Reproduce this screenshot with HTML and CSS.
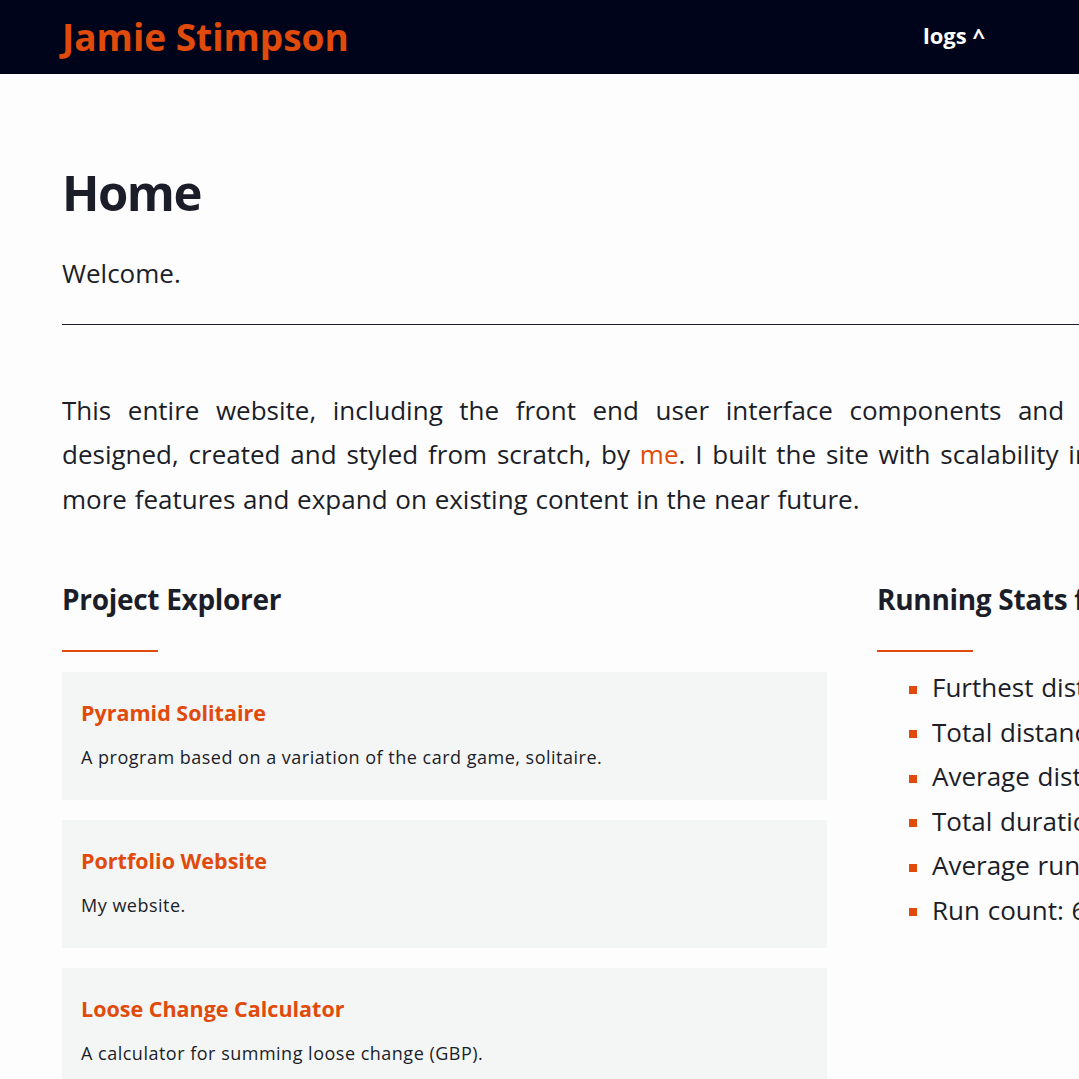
FILE: index.html
```html
<!DOCTYPE html>
<html lang="en">
<head>
<meta charset="utf-8">
<title>Jamie Stimpson</title>
<link rel="stylesheet" href="styles.css">
</head>
<body>
<header class="topbar">
  <a class="brand" href="#">Jamie Stimpson</a>
  <nav class="nav"><a class="nav-link" href="#">logs ^</a></nav>
</header>
<main class="page">
  <h1 class="page-title">Home</h1>
  <p class="lead">Welcome.</p>
  <hr class="rule">
  <p class="intro">This entire website, including the front end user interface components and backend, was designed, created and styled from scratch, by <a class="link" href="#">me</a>. I built the site with scalability in mind to add more features and expand on existing content in the near future.</p>
  <div class="columns">
    <section class="col">
      <h2 class="section-title">Project Explorer</h2>
      <div class="accent"></div>
      <div class="cards">
        <article class="card">
          <h3 class="card-title">Pyramid Solitaire</h3>
          <p class="card-text">A program based on a variation of the card game, solitaire.</p>
        </article>
        <article class="card">
          <h3 class="card-title">Portfolio Website</h3>
          <p class="card-text">My website.</p>
        </article>
        <article class="card">
          <h3 class="card-title">Loose Change Calculator</h3>
          <p class="card-text">A calculator for summing loose change (GBP).</p>
        </article>
      </div>
    </section>
    <section class="col">
      <h2 class="section-title">Running Stats for 2021</h2>
      <div class="accent"></div>
      <ul class="stats">
        <li class="stat"><span class="bullet"></span>Furthest distance: 7.2km</li>
        <li class="stat"><span class="bullet"></span>Total distance: 31.5km</li>
        <li class="stat"><span class="bullet"></span>Average distance: 5.25km</li>
        <li class="stat"><span class="bullet"></span>Total duration: 3h 12m</li>
        <li class="stat"><span class="bullet"></span>Average run time: 32m</li>
        <li class="stat"><span class="bullet"></span>Run count: 6</li>
      </ul>
    </section>
  </div>
</main>
</body>
</html>
```
FILE: styles.css
```css
html {
  overflow: hidden;
}
body {
  margin: 0;
  background: #fdfdfd;
  color: #1b1d28;
  font-family: "Open Sans", Lato, sans-serif;
}
a {
  text-decoration: none;
}
.topbar {
  height: 74px;
  background: #00041a;
  display: flex;
  align-items: center;
  justify-content: space-between;
  padding: 0 94px 0 62px;
}
.brand {
  color: #e04a0a;
  font-size: 37px;
  font-weight: 700;
  line-height: 74px;
}
.nav {
  padding-bottom: 4px;
}
.nav-link {
  color: #ffffff;
  font-size: 22px;
  font-weight: 700;
}
.page {
  width: 1192px;
  padding: 87px 0 40px 62px;
}
.page-title {
  margin: 0;
  font-size: 49px;
  line-height: 62px;
  font-weight: 700;
  letter-spacing: -1.5px;
}
.lead {
  margin: 28px 0 0;
  font-size: 26px;
  line-height: 44.5px;
}
.rule {
  margin: 28px 0 0;
  border: 0;
  border-top: 1px solid #1b1d28;
  height: 0;
}
.intro {
  margin: 63px 0 0;
  font-size: 26px;
  line-height: 44.5px;
  word-spacing: 1px;
  text-align: justify;
}
.link {
  color: #e04a0a;
}
.columns {
  display: grid;
  grid-template-columns: 765px 1fr;
  column-gap: 50px;
  margin-top: 60px;
}
.section-title {
  margin: 0;
  font-size: 28px;
  line-height: 36px;
  font-weight: 700;
  letter-spacing: -0.3px;
  white-space: nowrap;
}
.accent {
  width: 96px;
  height: 2px;
  background: #e04a0a;
  margin-top: 33px;
}
.cards {
  display: flex;
  flex-direction: column;
  gap: 20px;
  margin-top: 20px;
}
.card {
  background: #f4f6f6;
  height: 128px;
  box-sizing: border-box;
  padding: 27px 19px 0;
}
.card-title {
  margin: 0;
  color: #e04a0a;
  font-size: 21.5px;
  line-height: 28px;
  font-weight: 700;
}
.card-text {
  margin: 18px 0 0;
  font-size: 18px;
  line-height: 25px;
  letter-spacing: 0.5px;
}
.stats {
  list-style: none;
  margin: 13px 0 0;
  padding: 0 0 0 32px;
}
.stat {
  display: flex;
  align-items: center;
  font-size: 26px;
  line-height: 44.5px;
  word-spacing: 1px;
  white-space: nowrap;
}
.bullet {
  width: 8px;
  height: 8px;
  background: #e04a0a;
  margin: 5px 15px 0 0;
  flex: none;
}
```
